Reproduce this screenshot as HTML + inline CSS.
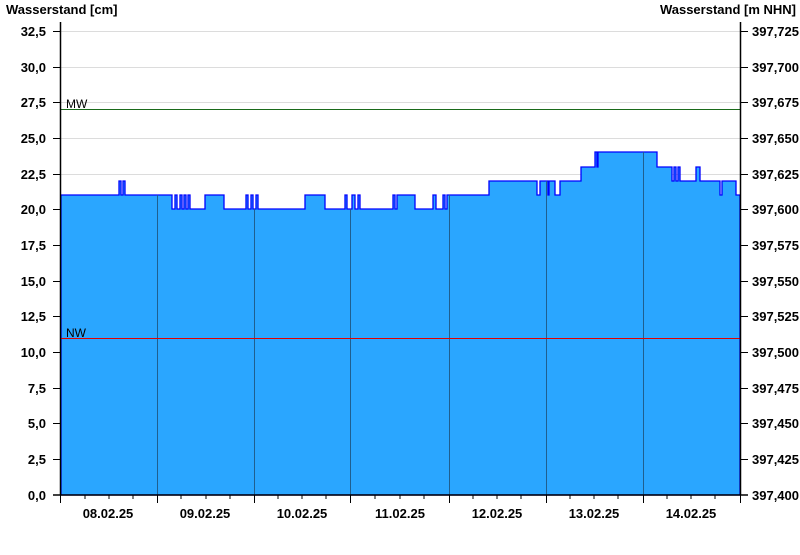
<!DOCTYPE html>
<html><head><style>
body{margin:0;background:#fff;width:800px;height:550px;overflow:hidden}
text{font-family:"Liberation Sans",Arial,sans-serif;font-weight:bold;font-size:13px;fill:#000}
</style></head><body>
<svg width="800" height="550" xmlns="http://www.w3.org/2000/svg">
<text x="6" y="14">Wasserstand [cm]</text>
<text x="796" y="14" text-anchor="end">Wasserstand [m NHN]</text>
<g stroke="#dcdcdc" stroke-width="1">
<line x1="61" x2="740" y1="31.5" y2="31.5"/><line x1="61" x2="740" y1="67.5" y2="67.5"/>
<line x1="61" x2="740" y1="102.5" y2="102.5"/><line x1="61" x2="740" y1="138.5" y2="138.5"/>
<line x1="61" x2="740" y1="174.5" y2="174.5"/>
</g>
<path fill="#2aa6ff" stroke="#0000ff" stroke-width="1.3" d="M61,195 H119 V181 H121 V195 H123 V181 H125 V195 H172 V209 H175 V195 H177 V209 H180 V195 H182 V209 H184 V195 H186 V209 H188 V195 H190 V209 H205 V195 H224 V209 H246 V195 H248 V209 H251 V195 H253 V209 H256 V195 H258 V209 H305 V195 H325 V209 H345 V195 H347 V209 H352 V195 H355 V209 H358 V195 H360 V209 H393 V195 H395 V209 H397 V195 H415 V209 H433 V195 H436 V209 H443 V195 H445 V209 H447 V195 H489 V181 H537 V195 H540 V181 H548 V195 H549 V181 H555 V195 H560 V181 H581 V167 H595 V152 H597 V167 H598 V152 H600 V152 H657 V167 H672 V181 H674 V167 H676 V181 H678 V167 H680 V181 H696 V167 H700 V181 H720 V195 H722 V181 H736 V195 H740 V495 H61 Z"/>
<g stroke="#1f5f8f" stroke-width="1">
<line x1="157.5" x2="157.5" y1="195" y2="495"/><line x1="254.5" x2="254.5" y1="209" y2="495"/>
<line x1="350.5" x2="350.5" y1="209" y2="495"/><line x1="449.5" x2="449.5" y1="195" y2="495"/>
<line x1="546.5" x2="546.5" y1="181" y2="495"/><line x1="643.5" x2="643.5" y1="152" y2="495"/>
</g>
<line x1="61" x2="740" y1="109.5" y2="109.5" stroke="#1a6a1a" stroke-width="1"/>
<line x1="61" x2="740" y1="338.5" y2="338.5" stroke="#e00000" stroke-width="1"/>
<text x="66" y="108" style="font-weight:normal;font-size:12px">MW</text>
<text x="66" y="337" style="font-weight:normal;font-size:12px">NW</text>
<g stroke="#000" stroke-width="1.5" fill="none">
<line x1="60.5" y1="22" x2="60.5" y2="495"/>
<line x1="740.5" y1="22" x2="740.5" y2="495"/>
<line x1="53" y1="495" x2="748" y2="495"/>
</g>
<g stroke="#000" stroke-width="1">
<path d="M53,31.5H61M53,67.5H61M53,102.5H61M53,138.5H61M53,174.5H61M53,209.5H61M53,245.5H61M53,281.5H61M53,316.5H61M53,352.5H61M53,388.5H61M53,423.5H61M53,459.5H61"/>
<path d="M740,31.5H748M740,67.5H748M740,102.5H748M740,138.5H748M740,174.5H748M740,209.5H748M740,245.5H748M740,281.5H748M740,316.5H748M740,352.5H748M740,388.5H748M740,423.5H748M740,459.5H748"/>
<path d="M60.5,495V503M157.5,495V503M254.5,495V503M350.5,495V503M449.5,495V503M546.5,495V503M643.5,495V503M740.5,495V503"/>
<path d="M85,495V499M109,495V499M133,495V499M181,495V499M206,495V499M230,495V499M278,495V499M302,495V499M326,495V499M375,495V499M400,495V499M424,495V499M473,495V499M497,495V499M521,495V499M570,495V499M594,495V499M618,495V499M667,495V499M691,495V499M715,495V499"/>
</g>
<g text-anchor="end">
<text x="46" y="36">32,5</text><text x="46" y="72">30,0</text><text x="46" y="107">27,5</text>
<text x="46" y="143">25,0</text><text x="46" y="179">22,5</text><text x="46" y="214">20,0</text>
<text x="46" y="250">17,5</text><text x="46" y="286">15,0</text><text x="46" y="321">12,5</text>
<text x="46" y="357">10,0</text><text x="46" y="393">7,5</text><text x="46" y="428">5,0</text>
<text x="46" y="464">2,5</text><text x="46" y="500">0,0</text>
</g>
<g>
<text x="752" y="36">397,725</text><text x="752" y="72">397,700</text><text x="752" y="107">397,675</text>
<text x="752" y="143">397,650</text><text x="752" y="179">397,625</text><text x="752" y="214">397,600</text>
<text x="752" y="250">397,575</text><text x="752" y="286">397,550</text><text x="752" y="321">397,525</text>
<text x="752" y="357">397,500</text><text x="752" y="393">397,475</text><text x="752" y="428">397,450</text>
<text x="752" y="464">397,425</text><text x="752" y="500">397,400</text>
</g>
<g text-anchor="middle">
<text x="108" y="518">08.02.25</text><text x="205" y="518">09.02.25</text><text x="302" y="518">10.02.25</text>
<text x="400" y="518">11.02.25</text><text x="497" y="518">12.02.25</text><text x="594" y="518">13.02.25</text>
<text x="691" y="518">14.02.25</text>
</g>
</svg>
</body></html>
